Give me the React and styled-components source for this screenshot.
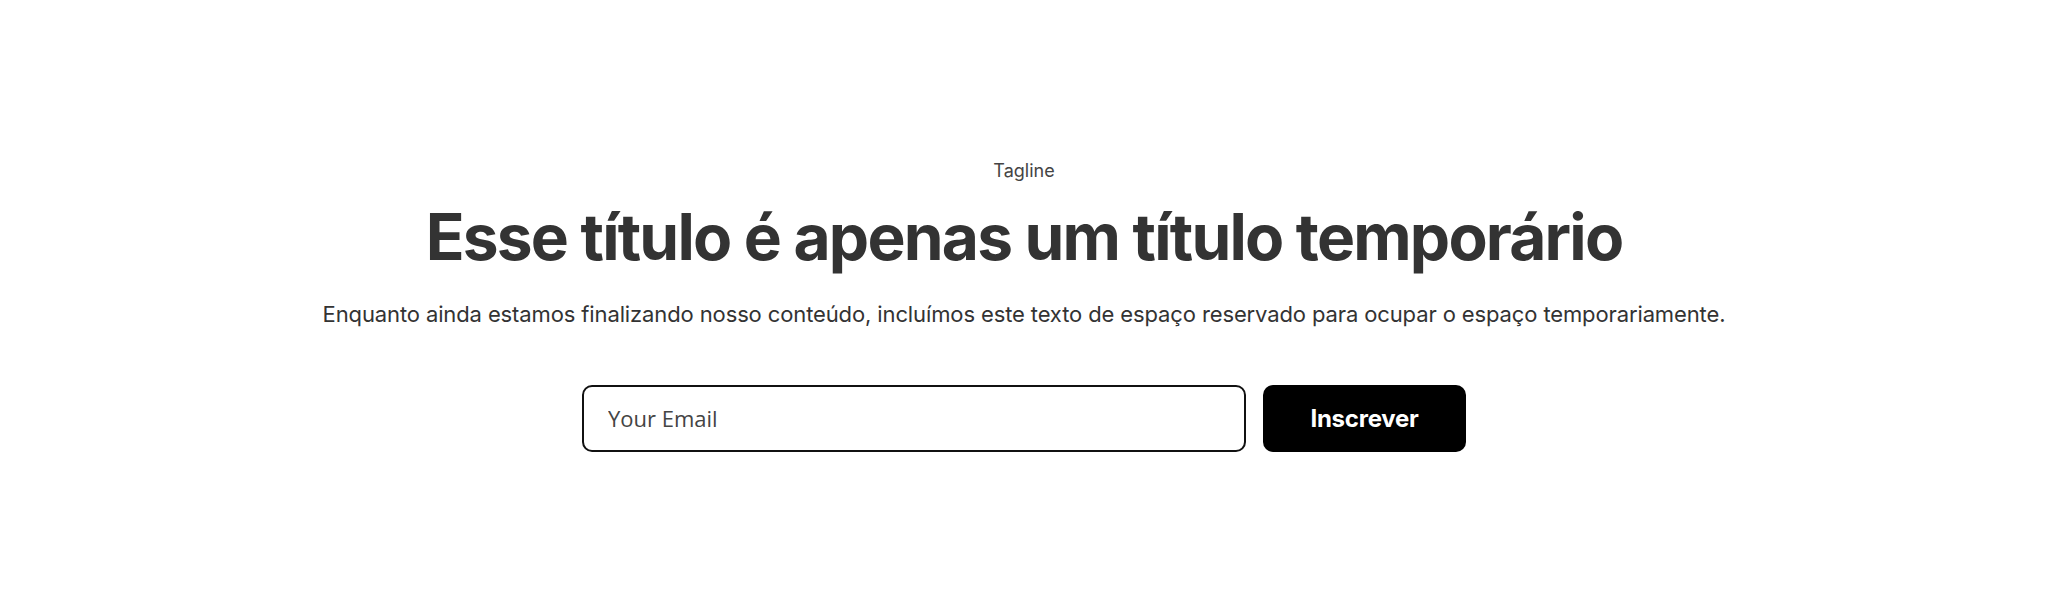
import React from 'react';
import styled, { createGlobalStyle } from 'styled-components';

const GlobalStyle = createGlobalStyle`
  * { box-sizing: border-box; }
  body {
    margin: 0;
    background: #fff;
    font-family: Inter, "Noto Sans", sans-serif;
    color: #333;
  }
`;

const Section = styled.section`
  display: flex;
  flex-direction: column;
  align-items: center;
  padding: 157px 64px 154px;
  text-align: center;
`;

const Tagline = styled.p`
  margin: 0;
  font-size: 18px;
  line-height: 27px;
  color: #444;
`;

const Title = styled.h1`
  margin: 14px 0 0;
  font-size: 64px;
  line-height: 77px;
  font-weight: 700;
  letter-spacing: -0.028em;
  color: #333;
`;

const Lead = styled.p`
  margin: 23px 0 0;
  font-size: 22px;
  line-height: 33px;
  letter-spacing: -0.12px;
  color: #333;
`;

const Form = styled.form`
  display: flex;
  gap: 17px;
  margin-top: 54px;
`;

const EmailInput = styled.input`
  width: 664px;
  height: 67px;
  padding: 0 24px 2px;
  border: 2px solid #111;
  border-radius: 10px;
  font-family: "Open Sans", sans-serif;
  font-size: 22px;
  color: #333;
  outline: none;

  &::placeholder {
    color: #444;
  }
`;

const SubmitButton = styled.button`
  width: 203px;
  height: 67px;
  border: none;
  border-radius: 10px;
  background: #000;
  color: #fff;
  font-family: Inter, sans-serif;
  font-size: 24px;
  font-weight: 700;
  letter-spacing: -0.01em;
  cursor: pointer;
`;

export default function App() {
  return (
    <>
      <GlobalStyle />
      <Section>
        <Tagline>Tagline</Tagline>
        <Title>Esse título é apenas um título temporário</Title>
        <Lead>
          Enquanto ainda estamos finalizando nosso conteúdo, incluímos este texto de espaço reservado para ocupar o espaço temporariamente.
        </Lead>
        <Form onSubmit={(e) => e.preventDefault()}>
          <EmailInput type="email" placeholder="Your Email" />
          <SubmitButton type="submit">Inscrever</SubmitButton>
        </Form>
      </Section>
    </>
  );
}
